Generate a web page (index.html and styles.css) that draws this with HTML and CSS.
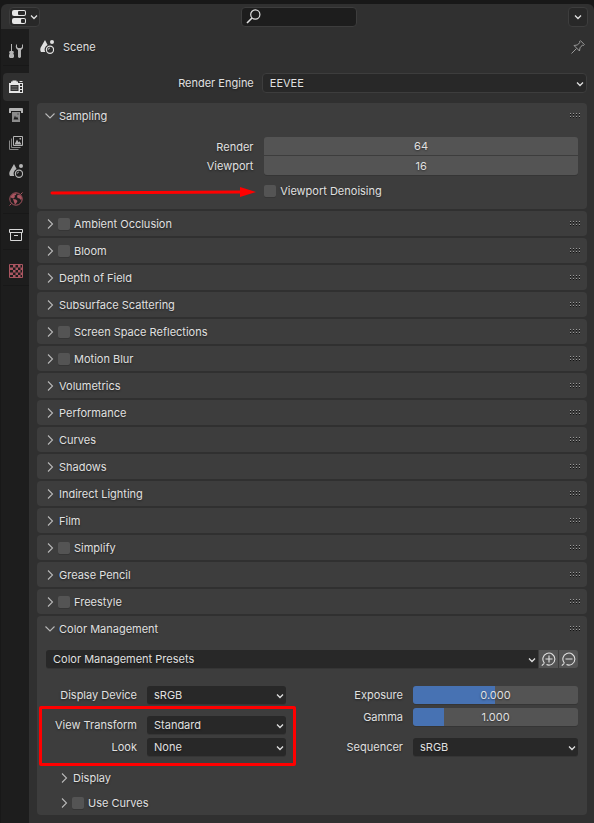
FILE: index.html
```html
<!DOCTYPE html>
<html lang="en">
<head>
<meta charset="utf-8">
<meta name="viewport" content="width=device-width, initial-scale=1">
<title>Render Properties</title>
<link rel="stylesheet" href="styles.css">
</head>
<body>
<svg class="sprite" aria-hidden="true">
  <symbol id="closed" viewBox="0 0 12 12"><path d="M4 1.5 8.5 6 4 10.5" fill="none" stroke="currentColor" stroke-width="1.1"/></symbol>
  <symbol id="open" viewBox="0 0 12 12"><path d="M1.5 3.5 6 8 10.5 3.5" fill="none" stroke="currentColor" stroke-width="1.1"/></symbol>
  <symbol id="drop" viewBox="0 0 8 8"><path d="M1 2.500 4 5.500 7 2.500" fill="none" stroke="currentColor" stroke-width="1.300"/></symbol>
  <symbol id="grip" viewBox="0 0 12 6">
    <path d="M1 1h1v1H1zM4 1h1v1H4zM7 1h1v1H7zM10 1h1v1h-1zM1 4h1v1H1zM4 4h1v1H4zM7 4h1v1H7zM10 4h1v1h-1z" fill="#111"/>
    <path d="M1 0h1v1H1zM4 0h1v1H4zM7 0h1v1H7zM10 0h1v1h-1zM1 3h1v1H1zM4 3h1v1H4zM7 3h1v1H7zM10 3h1v1h-1z" fill="#999"/>
  </symbol>
  <symbol id="scene" viewBox="0 0 14 14">
    <path d="M5 0 .7 7.6C0 9 .2 11 1 12h4.2A5 5 0 0 1 7.6 5z" fill="currentColor"/>
    <circle cx="12" cy="2" r="2" fill="currentColor"/>
    <circle cx="10" cy="9.8" r="3.6" fill="none" stroke="currentColor" stroke-width="1.2"/>
    <path d="M8.2 9.8A1.8 1.8 0 0 1 10 8" fill="none" stroke="currentColor" stroke-width=".8"/>
  </symbol>
</svg>

<div class="editor">
  <header class="bar">
    <button class="tool type" aria-label="Editor type">
      <svg width="14" height="14" viewBox="0 0 14 14"><rect width="14" height="6" rx="2" fill="#e6e6e6"/><rect x="6" y="1" width="7" height="4" rx="1" fill="#282828"/><rect y="8" width="14" height="6" rx="2" fill="#e6e6e6"/><rect x="9" y="9" width="4" height="4" rx="1" fill="#282828"/></svg>
      <svg width="8" height="8"><use href="#drop"/></svg>
    </button>
    <label class="search">
      <svg width="15" height="15" viewBox="0 0 15 15"><circle cx="9.3" cy="5.5" r="4.6" fill="none" stroke="#e0e0e0" stroke-width="1.2"/><path d="M6 9 1 14" stroke="#e0e0e0" stroke-width="1.6"/></svg>
      <input type="search" aria-label="Search">
    </label>
    <button class="tool options" aria-label="Options"><svg width="8" height="8"><use href="#drop"/></svg></button>
  </header>

  <div class="work">
    <nav class="tabs" aria-label="Property tabs">
      <div class="group">
        <button class="tab" aria-label="Tool"><svg width="14" height="14" viewBox="0 0 14 14"><path d="M2 0h1v7H2zM1 7h3l1 1-.7 1.500L5 11v2l-1 1H1l-1-1v-2l.7-1.500L0 8z" fill="currentColor"/><path d="M8 0C6 1.500 6.500 4.500 9 6v7q1.500 1.800 3 0V6c2.500-1.500 3-4.500 1-6v3l-1 1H9L8 3z" fill="currentColor"/></svg></button>
      </div>
      <div class="group">
        <button class="tab active" aria-label="Render"><svg width="14" height="14" viewBox="0 0 14 14"><path fill-rule="evenodd" d="M0 3h2V1.500h1.500V.5h4v1H9V3h5v10H0zM1.500 5v6h8V5zM11 4v2h2V4zM11 7v2h2V7zM11 10v2h2v-2z" fill="currentColor"/><path d="M10.500 1h3v1h-3z" fill="currentColor"/><path d="M2.500 6.500h6M2.500 8h6M2.500 9.500h6" stroke="#777" stroke-width=".7"/></svg></button>
        <button class="tab" aria-label="Output"><svg width="14" height="14" viewBox="0 0 14 14"><path d="M0 1q0-1 1-1h12q1 0 1 1v4h-2V3H2v2H0z" fill="currentColor"/><path fill-rule="evenodd" d="M3 4h8v10H3zM4.500 11.500h5L8 8.500 7 10 6 7.500zM8.500 5.500v1h1v-1z" fill="#8c8c8c"/></svg></button>
        <button class="tab" aria-label="View layer"><svg width="14" height="14" viewBox="0 0 14 14"><path d="M4.500.5h9v9h-9z" fill="none" stroke="currentColor"/><path d="M5.500 8.500 8 3.500l1.500 2.700 1-1 2 3.300zM10.500 2h1.500v1.500h-1.500z" fill="currentColor"/><path d="M2.500 2.500v9h9M.5 4.500v9h9" fill="none" stroke="#888"/></svg></button>
        <button class="tab" aria-label="Scene"><svg width="14" height="14"><use href="#scene"/></svg></button>
        <button class="tab red" aria-label="World"><svg width="14" height="14" viewBox="0 0 14 14"><circle cx="7" cy="7" r="6.2" fill="none" stroke="currentColor"/><path d="M1.500 4.500 4 2l3.500-.8L7 3 5.500 3.500 6 5 4.500 6.500 2.500 6zM4 7l3 .5 1.500 1.500L7.500 11 6 12.500 5 10zM9 2.500l2.500 1L13 6l-1 2-1.500-1.500L8.500 6l-.5-2z" fill="currentColor"/><path d="m11.500 2.500 2-2M.5 13.500l2-2" stroke="currentColor"/></svg></button>
      </div>
      <div class="group">
        <button class="tab bright" aria-label="Collection"><svg width="14" height="14" viewBox="0 0 14 14"><path d="M.5 1.500h13v3H.5zM1.500 5v7.500h11V5" fill="none" stroke="currentColor"/><path d="M5 7h4v1H5z" fill="currentColor"/></svg></button>
      </div>
      <div class="group">
        <button class="tab red" aria-label="Texture"><svg width="14" height="14" viewBox="0 0 14 14"><path d="M.5.5h13v13H.5z" fill="none" stroke="currentColor"/><path d="M4 1h2.500v2.500H4zM9 1h2.500v2.500H9zM1 3.500h3V6H1zM6.500 3.500H9V6H6.500zM11.500 3.500H13V6h-1.500zM4 6h2.500v2.500H4zM9 6h2.500v2.500H9zM1 8.500h3V11H1zM6.500 8.500H9V11H6.500zM11.500 8.500H13V11h-1.500zM4 11h2.500v2H4zM9 11h2.500v2H9z" fill="currentColor"/></svg></button>
      </div>
    </nav>

    <main class="content">
      <div class="crumb">
        <svg width="14" height="14"><use href="#scene"/></svg>
        <h1>Scene</h1>
        <button class="plain pin" aria-label="Pin"><svg width="14" height="14" viewBox="0 0 14 14"><path d="M9.500.7 13.300 4.500 12.500 5.500 11.500 5 9 7.800 8.500 11 3 5.500 6.200 5 9 2.500 8.500 1.500zM5.500 8.500.5 13.500" fill="none" stroke="currentColor"/></svg></button>
      </div>

      <div class="split engine">
        <label for="engine">Render Engine</label>
        <div class="select outlined"><select id="engine"><option>EEVEE</option></select><svg width="8" height="8"><use href="#drop"/></svg></div>
      </div>

      <section class="panel">
        <div class="head"><button class="plain title"><svg width="12" height="12"><use href="#open"/></svg>Sampling</button><svg class="grip" width="12" height="6"><use href="#grip"/></svg></div>
        <div class="body">
          <div class="split">
            <label for="render">Render</label><input class="number first" id="render" type="text" inputmode="numeric" value="64">
            <label for="viewport">Viewport</label><input class="number last" id="viewport" type="text" inputmode="numeric" value="16">
          </div>
          <div class="split denoise"><label class="check"><input type="checkbox">Viewport Denoising</label></div>
          <svg class="arrow" width="206" height="12" viewBox="0 0 206 12" aria-hidden="true"><path d="M2 7 192 6" stroke="red" stroke-width="3" stroke-linecap="round"/><path d="M190 1 206 6 190 11z" fill="red"/></svg>
        </div>
      </section>

      <section class="panel"><div class="head"><button class="plain" aria-label="Expand Ambient Occlusion"><svg width="12" height="12"><use href="#closed"/></svg></button><label class="check"><input type="checkbox">Ambient Occlusion</label><svg class="grip" width="12" height="6"><use href="#grip"/></svg></div></section>
      <section class="panel"><div class="head"><button class="plain" aria-label="Expand Bloom"><svg width="12" height="12"><use href="#closed"/></svg></button><label class="check"><input type="checkbox">Bloom</label><svg class="grip" width="12" height="6"><use href="#grip"/></svg></div></section>
      <section class="panel"><div class="head"><button class="plain title"><svg width="12" height="12"><use href="#closed"/></svg>Depth of Field</button><svg class="grip" width="12" height="6"><use href="#grip"/></svg></div></section>
      <section class="panel"><div class="head"><button class="plain title"><svg width="12" height="12"><use href="#closed"/></svg>Subsurface Scattering</button><svg class="grip" width="12" height="6"><use href="#grip"/></svg></div></section>
      <section class="panel"><div class="head"><button class="plain" aria-label="Expand Screen Space Reflections"><svg width="12" height="12"><use href="#closed"/></svg></button><label class="check"><input type="checkbox">Screen Space Reflections</label><svg class="grip" width="12" height="6"><use href="#grip"/></svg></div></section>
      <section class="panel"><div class="head"><button class="plain" aria-label="Expand Motion Blur"><svg width="12" height="12"><use href="#closed"/></svg></button><label class="check"><input type="checkbox">Motion Blur</label><svg class="grip" width="12" height="6"><use href="#grip"/></svg></div></section>
      <section class="panel"><div class="head"><button class="plain title"><svg width="12" height="12"><use href="#closed"/></svg>Volumetrics</button><svg class="grip" width="12" height="6"><use href="#grip"/></svg></div></section>
      <section class="panel"><div class="head"><button class="plain title"><svg width="12" height="12"><use href="#closed"/></svg>Performance</button><svg class="grip" width="12" height="6"><use href="#grip"/></svg></div></section>
      <section class="panel"><div class="head"><button class="plain title"><svg width="12" height="12"><use href="#closed"/></svg>Curves</button><svg class="grip" width="12" height="6"><use href="#grip"/></svg></div></section>
      <section class="panel"><div class="head"><button class="plain title"><svg width="12" height="12"><use href="#closed"/></svg>Shadows</button><svg class="grip" width="12" height="6"><use href="#grip"/></svg></div></section>
      <section class="panel"><div class="head"><button class="plain title"><svg width="12" height="12"><use href="#closed"/></svg>Indirect Lighting</button><svg class="grip" width="12" height="6"><use href="#grip"/></svg></div></section>
      <section class="panel"><div class="head"><button class="plain title"><svg width="12" height="12"><use href="#closed"/></svg>Film</button><svg class="grip" width="12" height="6"><use href="#grip"/></svg></div></section>
      <section class="panel"><div class="head"><button class="plain" aria-label="Expand Simplify"><svg width="12" height="12"><use href="#closed"/></svg></button><label class="check"><input type="checkbox">Simplify</label><svg class="grip" width="12" height="6"><use href="#grip"/></svg></div></section>
      <section class="panel"><div class="head"><button class="plain title"><svg width="12" height="12"><use href="#closed"/></svg>Grease Pencil</button><svg class="grip" width="12" height="6"><use href="#grip"/></svg></div></section>
      <section class="panel"><div class="head"><button class="plain" aria-label="Expand Freestyle"><svg width="12" height="12"><use href="#closed"/></svg></button><label class="check"><input type="checkbox">Freestyle</label><svg class="grip" width="12" height="6"><use href="#grip"/></svg></div></section>

      <section class="panel">
        <div class="head"><button class="plain title"><svg width="12" height="12"><use href="#open"/></svg>Color Management</button><svg class="grip" width="12" height="6"><use href="#grip"/></svg></div>
        <div class="body">
          <div class="presets">
            <div class="select"><select aria-label="Color Management Presets"><option>Color Management Presets</option></select><svg width="8" height="8"><use href="#drop"/></svg></div>
            <button class="mini" aria-label="Add preset"><svg width="15" height="15" viewBox="0 0 15 15"><path d="M3.400 11.100A6 6 0 1 1 5.500 12.600M3.400 11.100.8 13.700M8 3.500v7M4.500 7h7" fill="none" stroke="currentColor" stroke-width="1.100"/></svg></button>
            <button class="mini" aria-label="Remove preset"><svg width="15" height="15" viewBox="0 0 15 15"><path d="M3.400 11.100A6 6 0 1 1 5.500 12.600M3.400 11.100.8 13.700M4.500 7h7" fill="none" stroke="currentColor" stroke-width="1.100"/></svg></button>
          </div>
          <div class="columns">
            <div class="column inset">
              <div class="field"><label for="device">Display Device</label><div class="select"><select id="device"><option>sRGB</option></select><svg width="8" height="8"><use href="#drop"/></svg></div></div>
              <div class="stack">
                <div class="field"><label for="view">View Transform</label><div class="select"><select id="view"><option>Standard</option></select><svg width="8" height="8"><use href="#drop"/></svg></div></div>
                <div class="field"><label for="look">Look</label><div class="select"><select id="look"><option>None</option></select><svg width="8" height="8"><use href="#drop"/></svg></div></div>
                <div class="highlight"></div>
              </div>
            </div>
            <div class="column">
              <div class="stack">
                <div class="field"><label for="exposure">Exposure</label><div class="slider" style="--fill: 49.5%"><input id="exposure" type="range" min="-10" max="10" step="0.001" value="0"><output for="exposure">0.000</output></div></div>
                <div class="field"><label for="gamma">Gamma</label><div class="slider" style="--fill: 19%"><input id="gamma" type="range" min="0" max="5" step="0.001" value="1"><output for="gamma">1.000</output></div></div>
              </div>
              <div class="field"><label for="sequencer">Sequencer</label><div class="select"><select id="sequencer"><option>sRGB</option></select><svg width="8" height="8"><use href="#drop"/></svg></div></div>
            </div>
          </div>
        </div>
        <div class="head sub"><button class="plain title"><svg width="12" height="12"><use href="#closed"/></svg>Display</button></div>
        <div class="head sub"><button class="plain" aria-label="Expand Use Curves"><svg width="12" height="12"><use href="#closed"/></svg></button><label class="check"><input type="checkbox">Use Curves</label></div>
      </section>
    </main>
  </div>
</div>
</body>
</html>
```
FILE: styles.css
```css
* { box-sizing: border-box; }

body {
  margin: 0;
  background: #181818;
  color: #e0e0e0;
  font: 11px/18px Inter, "Liberation Sans", sans-serif;
  text-shadow: 0 1px 2px rgba(0, 0, 0, .5);
}

svg { display: block; flex: none; }
.sprite { position: absolute; width: 0; height: 0; }

button, input, select {
  margin: 0;
  color: inherit;
  font: inherit;
  text-shadow: inherit;
}

.editor {
  display: flex;
  flex-direction: column;
  min-height: calc(100vh - 4px);
  margin: 4px 0 0 1px;
  border-radius: 6px 6px 0 0;
  background: #303030;
  overflow: hidden;
}

/* Header bar */
.bar {
  display: grid;
  grid-template-columns: 1fr 116px 1fr;
  align-items: center;
  height: 25px;
  padding: 0 6px 0 8px;
}

.tool {
  display: flex;
  align-items: center;
  justify-content: center;
  gap: 4px;
  height: 20px;
  padding: 0;
  border: 1px solid #3d3d3d;
  border-radius: 4px;
  background: #282828;
}
.type { width: 31px; }
.options { width: 20px; justify-self: end; }

.search {
  display: flex;
  align-items: center;
  height: 20px;
  padding: 0 4px;
  border: 1px solid #3d3d3d;
  border-radius: 4px;
  background: #1d1d1d;
}
.search input {
  flex: 1;
  min-width: 0;
  padding: 0 4px;
  border: 0;
  outline: 0;
  background: none;
}

.work { display: flex; flex: 1; }

/* Tab strip */
.tabs {
  display: flex;
  flex-direction: column;
  flex: none;
  gap: 8px;
  width: 28px;
  padding: 8px 0 0 2px;
  background: #1d1d1d;
}
.group { box-shadow: 0 1px #181818; }
.tab {
  display: flex;
  align-items: center;
  width: 100%;
  height: 28px;
  padding: 0 6px;
  border: 0;
  border-radius: 4px 0 0 4px;
  background: none;
  color: #b4b4b4;
}
.tab.active { background: #303030; color: #e6e6e6; }
.tab.bright { color: #d8d8d8; }
.tab.red { color: #a95560; }

/* Properties */
.content { flex: 1; min-width: 0; padding: 0 7px 8px 8px; }

.plain { padding: 0; border: 0; background: none; }

.crumb {
  display: flex;
  align-items: center;
  gap: 9px;
  height: 36px;
  padding: 0 2px 0 3px;
}
.crumb h1 { margin: 0; font-size: 11px; font-weight: 400; }
.pin { margin-left: auto; color: #999; }

.split {
  display: grid;
  grid-template-columns: 39% 59%;
  justify-content: space-between;
  align-items: center;
}
.split > label:not(.check), .field > label { text-align: right; white-space: nowrap; }
.engine {
  grid-template-columns: 2fr 3fr;
  column-gap: 8px;
  height: 20px;
  margin: 8px 0 10px;
}

.panel {
  margin-bottom: 2px;
  border-radius: 4px;
  background: #3d3d3d;
}
.head {
  display: flex;
  align-items: center;
  gap: 2px;
  height: 25px;
  padding: 0 6px 0 7px;
}
.head .plain { color: #e0e0e0; }
.head .plain svg { color: #b8b8b8; }
.title { display: flex; align-items: center; gap: 3px; }
.grip { margin-left: auto; }
.sub { padding-left: 21px; }

.check { display: flex; align-items: center; gap: 4px; }
.check input {
  appearance: none;
  width: 12px;
  height: 12px;
  border-radius: 2px;
  background: #545454;
  box-shadow: 0 1px #353535;
}
.check input:checked { background: #4772b3; }

.body { position: relative; padding: 9px; }

.number {
  width: 100%;
  height: 19px;
  padding: 0;
  border: 0;
  background: #545454;
  text-align: center;
}
.first { border-bottom: 1px solid #3d3d3d; border-radius: 3px 3px 0 0; }
.last { border-radius: 0 0 3px 3px; box-shadow: 0 1px #353535; }
.denoise { margin-top: 7px; }
.denoise .check { grid-column: 2; }
.arrow { position: absolute; left: 13px; bottom: 11px; }

.select {
  position: relative;
  min-width: 0;
  height: 18px;
  border-radius: 3px;
  background: #282828;
  box-shadow: 0 1px #353535;
}
.select select {
  display: block;
  appearance: none;
  width: 100%;
  height: 100%;
  padding: 0 16px 0 7px;
  border: 0;
  border-radius: inherit;
  background: none;
}
.select svg { position: absolute; right: 2px; top: 6px; pointer-events: none; }
.outlined { height: 20px; border: 1px solid #3d3d3d; border-radius: 4px; box-shadow: none; }

.presets { display: flex; gap: 1px; margin-bottom: 18px; }
.presets .select { flex: 1; border-radius: 3px 0 0 3px; }
.mini {
  display: flex;
  align-items: center;
  justify-content: center;
  width: 19px;
  height: 18px;
  padding: 0;
  border: 0;
  background: #545454;
}
.mini:last-child { border-radius: 0 3px 3px 0; }

.columns { display: grid; grid-template-columns: 1fr 1fr; }
.column { display: flex; flex-direction: column; gap: 12px; }
.inset { padding-right: 26px; }
.stack { position: relative; display: flex; flex-direction: column; gap: 4px; }
.field {
  display: grid;
  grid-template-columns: 91px 1fr;
  gap: 10px;
  align-items: center;
}

.slider {
  position: relative;
  height: 18px;
  border-radius: 3px;
  background: linear-gradient(to right, #4772b3 var(--fill), #545454 var(--fill));
  box-shadow: 0 1px #353535;
}
.slider input {
  display: block;
  appearance: none;
  width: 100%;
  height: 100%;
  background: none;
}
.slider input::-webkit-slider-thumb { appearance: none; width: 1px; height: 18px; }
.slider output {
  position: absolute;
  inset: 0;
  text-align: center;
  pointer-events: none;
}

.highlight {
  position: absolute;
  inset: -10px -10px -10px -7px;
  border: 3px solid #f00;
  border-radius: 2px;
  pointer-events: none;
}
```
